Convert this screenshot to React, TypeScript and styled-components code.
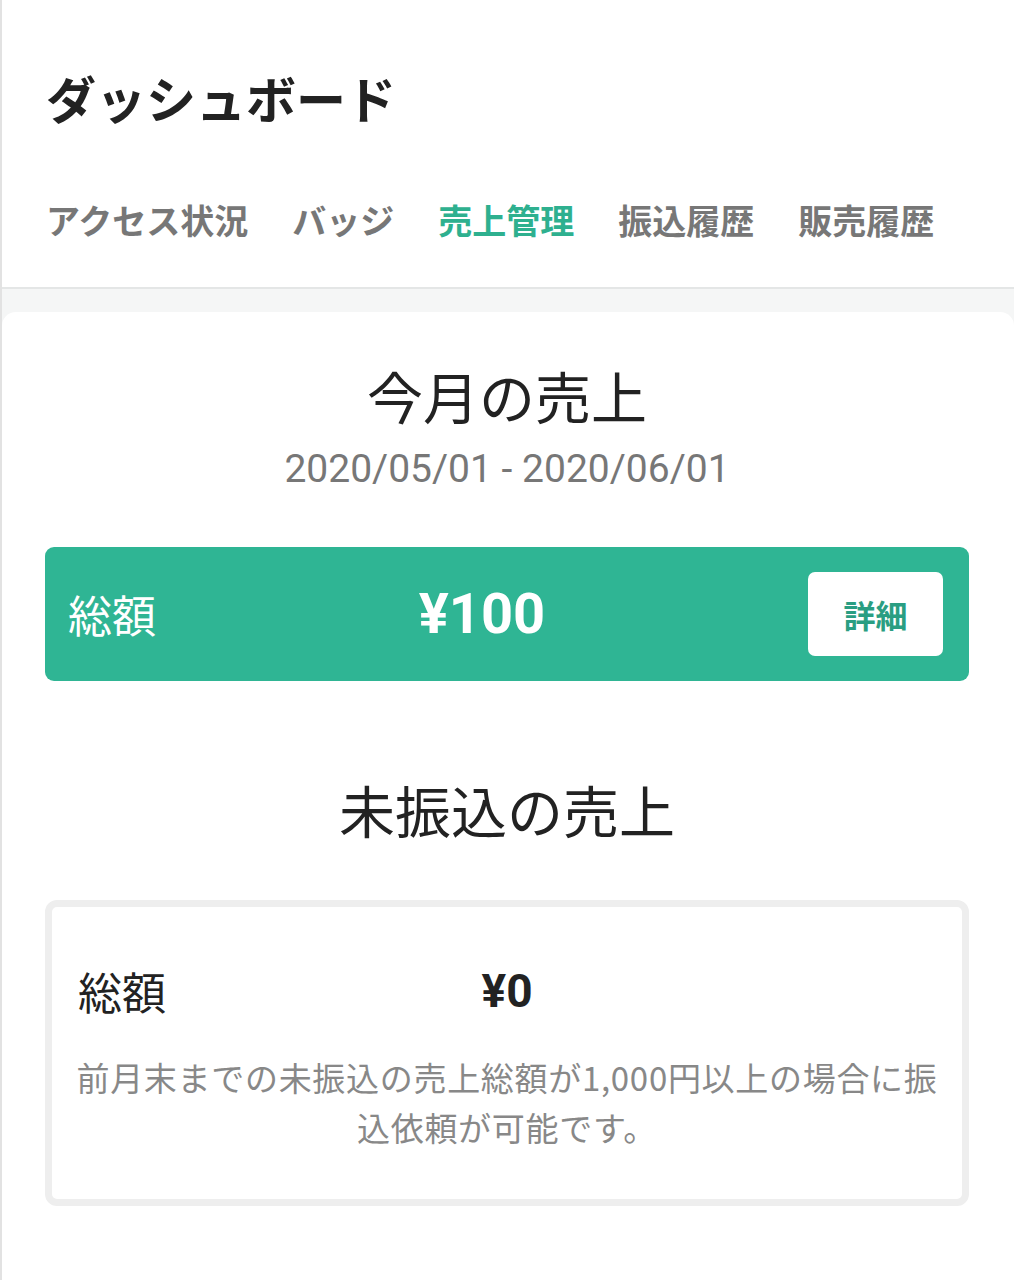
import styled, { createGlobalStyle } from "styled-components";

const GlobalStyle = createGlobalStyle`
    html, body {
        margin: 0;
        padding: 0;
        background: #ffffff;
        font-family: "Noto Sans CJK JP", "Noto Sans", sans-serif;
        color: #222222;
    }
`;

const Page = styled.div`
    min-height: 1280px;
    border-left: 2px solid #e2e2e2;
    background: #f5f6f6;
`;

const Header = styled.header`
    background: #ffffff;
    padding: 72px 0 50px 44px;
    border-bottom: 2px solid #e4e6e6;
`;

const Title = styled.h1`
    margin: 0;
    font-size: 50px;
    line-height: 50px;
    font-weight: 700;
    color: #222222;
`;

const Tabs = styled.nav`
    display: flex;
    gap: 44px;
    margin-top: 81px;
`;

const Tab = styled.span<{ active?: boolean }>`
    font-size: 34px;
    line-height: 34px;
    font-weight: 700;
    color: ${(p) => (p.active ? "#2eb08f" : "#777777")};
`;

const Card = styled.main`
    margin-top: 23px;
    background: #ffffff;
    border-radius: 14px 14px 0 0;
    padding: 56px 45px 60px 43px;
    display: flex;
    flex-direction: column;
    align-items: stretch;
    min-height: 900px;
`;

const SectionTitle = styled.h2<{ gap: number }>`
    margin: ${(p) => p.gap}px 0 0 0;
    text-align: center;
    font-size: 56px;
    line-height: 54px;
    font-weight: 400;
    color: #222222;
`;

const Period = styled.div`
    margin-top: 28px;
    text-align: center;
    font-family: Roboto, "Noto Sans CJK JP", sans-serif;
    font-size: 39px;
    line-height: 38px;
    color: #777777;
`;

const TotalBar = styled.div`
    margin-top: 59px;
    height: 134px;
    background: #2fb594;
    border-radius: 9px;
    display: flex;
    align-items: center;
    padding: 0 26px 0 23px;
    color: #ffffff;
`;

const BarLabel = styled.span`
    font-size: 44px;
    line-height: 50px;
`;

const BarAmount = styled.span`
    flex: 1;
    text-align: center;
    font-family: Roboto, "Noto Sans CJK JP", sans-serif;
    font-size: 56px;
    line-height: 56px;
    font-weight: 700;
`;

const DetailButton = styled.button`
    width: 135px;
    height: 84px;
    border: none;
    border-radius: 7px;
    background: #ffffff;
    color: #2a9e82;
    font-family: "Noto Sans CJK JP", sans-serif;
    font-size: 32px;
    font-weight: 700;
    cursor: pointer;
`;

const PendingBox = styled.section`
    margin-top: 64px;
    border: 7px solid #eeeeee;
    border-radius: 12px;
    padding: 59px 20px 47px 20px;
`;

const PendingRow = styled.div`
    display: grid;
    grid-template-columns: 1fr auto 1fr;
    align-items: center;
    height: 50px;
`;

const PendingLabel = styled.span`
    padding-left: 6px;
    font-size: 44px;
    line-height: 50px;
    color: #222222;
`;

const PendingAmount = styled.span`
    font-family: Roboto, "Noto Sans CJK JP", sans-serif;
    font-size: 46px;
    line-height: 50px;
    font-weight: 700;
    color: #222222;
`;

const Note = styled.p`
    margin: 36px 0 0 0;
    text-align: center;
    font-size: 33px;
    letter-spacing: 0.7px;
    line-height: 50px;
    color: #888888;
`;

const tabs = ["アクセス状況", "バッジ", "売上管理", "振込履歴", "販売履歴"];

export default function App() {
    return (
        <>
            <GlobalStyle />
            <Page>
                <Header>
                    <Title>ダッシュボード</Title>
                    <Tabs>
                        {tabs.map((t) => (
                            <Tab key={t} active={t === "売上管理"}>
                                {t}
                            </Tab>
                        ))}
                    </Tabs>
                </Header>
                <Card>
                    <SectionTitle gap={0}>今月の売上</SectionTitle>
                    <Period>2020/05/01 - 2020/06/01</Period>
                    <TotalBar>
                        <BarLabel>総額</BarLabel>
                        <BarAmount>¥100</BarAmount>
                        <DetailButton>詳細</DetailButton>
                    </TotalBar>
                    <SectionTitle gap={101}>未振込の売上</SectionTitle>
                    <PendingBox>
                        <PendingRow>
                            <PendingLabel>総額</PendingLabel>
                            <PendingAmount>¥0</PendingAmount>
                            <span />
                        </PendingRow>
                        <Note>前月末までの未振込の売上総額が1,000円以上の場合に振込依頼が可能です。</Note>
                    </PendingBox>
                </Card>
            </Page>
        </>
    );
}
